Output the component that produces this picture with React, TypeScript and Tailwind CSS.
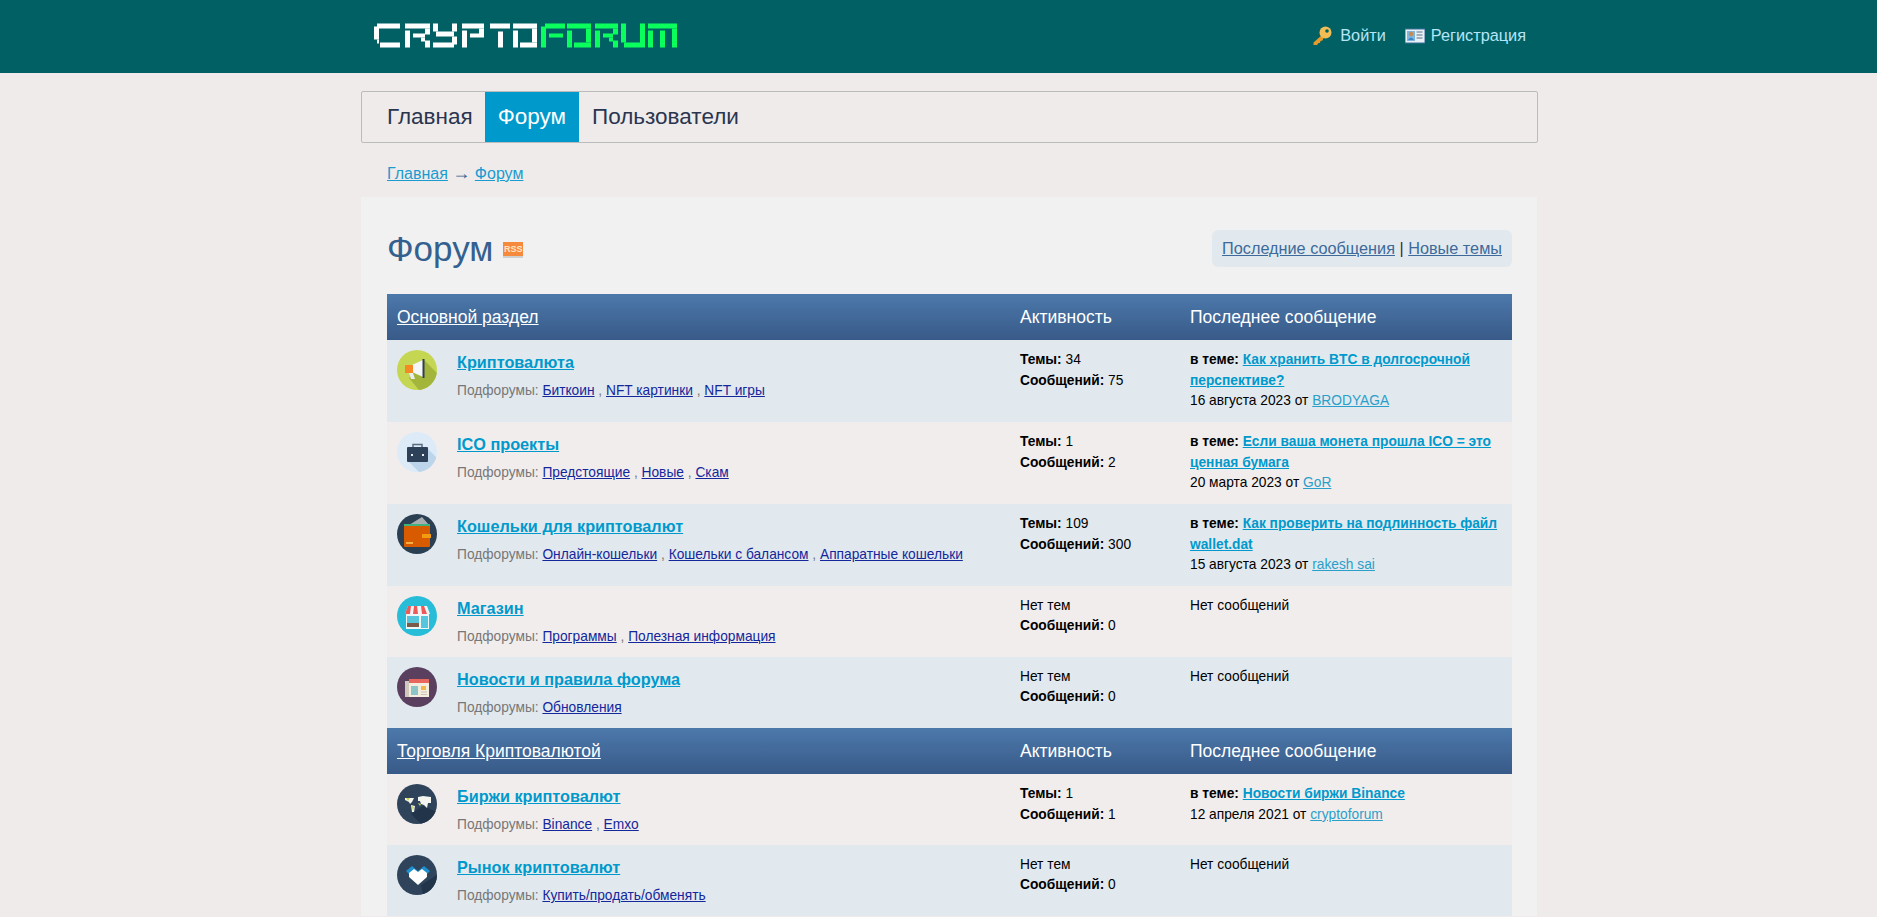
import type { ReactNode } from "react";

type Forum = {
  icon: ReactNode;
  title: string;
  subs: string[];
  topics?: number;
  posts: number;
  topic?: string;
  date?: string;
  author?: string;
};

type Section = { title: string; forums: Forum[] };

// every glyph of the logo is a few blocks: [x, y, w, h] in a 24x24 cell
const logoLetters: { x: number; w: number; green?: boolean; blocks: number[][] }[] = [
  { x: 0, w: 26, blocks: [[3, 0, 23, 5], [0, 3, 5, 13], [3, 16, 2, 4], [6, 19, 20, 5]] },
  { x: 31, w: 25, blocks: [[0, 0, 25, 5], [0, 7, 5, 17], [20, 5, 5, 6], [8, 10, 12, 4], [16, 14, 4, 4], [20, 17, 5, 7]] },
  { x: 59, w: 24, blocks: [[0, 0, 5, 8], [19, 0, 5, 8], [3, 8, 18, 5], [0, 19, 21, 5], [19, 13, 5, 8]] },
  { x: 88, w: 22, blocks: [[0, 0, 22, 5], [0, 7, 5, 17], [17, 5, 5, 6], [8, 10, 14, 4]] },
  { x: 116, w: 20, blocks: [[0, 0, 20, 5], [8, 8, 5, 16]] },
  { x: 139, w: 24, blocks: [[0, 0, 24, 5], [0, 7, 5, 17], [19, 5, 5, 14], [7, 19, 17, 5]] },
  { x: 167, w: 22, green: true, blocks: [[4, 0, 20, 5], [0, 3, 5, 21], [8, 10, 14, 4]] },
  { x: 193, w: 24, green: true, blocks: [[0, 0, 24, 5], [0, 7, 5, 17], [19, 5, 5, 14], [7, 19, 17, 5]] },
  { x: 221, w: 23, green: true, blocks: [[0, 0, 23, 5], [0, 7, 5, 17], [18, 5, 5, 6], [8, 10, 10, 4], [14, 14, 4, 4], [18, 17, 5, 7]] },
  { x: 247, w: 24, green: true, blocks: [[0, 0, 5, 19], [19, 0, 5, 24], [3, 19, 16, 5]] },
  { x: 274, w: 29, green: true, blocks: [[0, 0, 29, 5], [0, 7, 5, 17], [12, 7, 5, 17], [24, 5, 5, 19]] },
];

function Logo() {
  return (
    <svg width="303" height="25" viewBox="0 0 303 24" role="img" aria-label="CryptoForum" className="block">
      {logoLetters.map((letter) => (
        <g key={letter.x} fill={letter.green ? "#0aff5c" : "#ffffff"} transform={`translate(${letter.x} 0)`}>
          {letter.blocks.map((b, i) => (
            <rect key={i} x={b[0]} y={b[1]} width={b[2]} height={b[3]} />
          ))}
        </g>
      ))}
    </svg>
  );
}

function KeyIcon() {
  return (
    <svg width="20" height="20" viewBox="0 0 20 20" className="shrink-0">
      <path d="M10 9 1.5 16.5 1.5 19 5 19 6.5 17 8 17 8.5 15 10.5 14.5 12 11Z" fill="#e59a2c" />
      <circle cx="13.5" cy="6.5" r="6" fill="#f2bd55" />
      <circle cx="15" cy="5" r="1.8" fill="#00605f" />
    </svg>
  );
}

function CardIcon() {
  return (
    <svg width="20" height="16" viewBox="0 0 20 16" className="shrink-0">
      <rect x="0" y="1" width="20" height="14" fill="#e8f0f5" stroke="#3b6f9a" />
      <rect x="2" y="3" width="8" height="10" fill="#7db4e0" />
      <circle cx="6" cy="6" r="2.2" fill="#c98a4e" />
      <path d="M3 12q3-5 6 0Z" fill="#3c86c8" />
      <path d="M11.5 4h6M11.5 7h6M11.5 10h6" stroke="#8a9aa8" strokeWidth="1.3" />
    </svg>
  );
}

function RssIcon() {
  return (
    <span className="ml-[10px] mt-[3px] flex h-[16px] w-[20px] items-center justify-center bg-[#f58a3c] border-b-2 border-[#cfcfcf] text-[9px] font-bold leading-none text-[#ffe4c8]">
      RSS
    </span>
  );
}

function Circle({ bg, children }: { bg: string; children: ReactNode }) {
  return (
    <svg width="40" height="40" viewBox="0 0 40 40" className="block shrink-0">
      <defs>
        <clipPath id="forum-circle">
          <circle cx="20" cy="20" r="20" />
        </clipPath>
      </defs>
      <circle cx="20" cy="20" r="20" fill={bg} />
      <g clipPath="url(#forum-circle)">{children}</g>
    </svg>
  );
}

const MegaphoneIcon = (
  <Circle bg="#c5d652">
    <path d="M27 10 40 23V40H22L12 28Z" fill="#a3b53a" />
    <path d="M15 15 26 10V27L15 22Z" fill="#f4f6f7" />
    <rect x="8" y="15" width="8" height="8" fill="#f58a25" />
    <path d="M12 23h4l2 6h-4Z" fill="#e9eef1" />
    <rect x="25.5" y="9" width="2" height="19" fill="#2f3f50" />
  </Circle>
);

const BriefcaseIcon = (
  <Circle bg="#dcebf7">
    <path d="M29 15 40 26V40H22L10 28Z" fill="#bcd5ea" />
    <rect x="10" y="15" width="21" height="15" rx="1" fill="#2d4258" />
    <path d="M16 15v-2.5h9V15" fill="none" stroke="#5a6d80" strokeWidth="1.5" />
    <rect x="14" y="22" width="2" height="2" fill="#e8eef3" />
    <rect x="25" y="22" width="2" height="2" fill="#e8eef3" />
  </Circle>
);

const WalletIcon = (
  <Circle bg="#2b3f53">
    <path d="M12 11 25 3 32 11Z" fill="#a8adb0" />
    <rect x="7" y="10" width="26" height="3" fill="#3fb27f" />
    <rect x="7" y="12" width="26" height="21" rx="1" fill="#d95b00" />
    <rect x="25" y="20" width="9" height="4" fill="#f39c12" />
    <rect x="9" y="28" width="7" height="2" fill="#f5b041" />
  </Circle>
);

const ShopIcon = (
  <Circle bg="#27bcd8">
    <rect x="9" y="18" width="23" height="15" fill="#eef6f8" />
    <rect x="10" y="20" width="12" height="8" fill="#55c6dc" />
    <rect x="24" y="20" width="7" height="12" fill="#55c6dc" />
    <rect x="10" y="27" width="12" height="4" fill="#7a5a48" />
    <path d="M11 10h19l3 8H8Z" fill="#f4f4f4" />
    <path d="M11 10h3l-1 8H8ZM17 10h3l1 8h-5ZM24 10h3l3 8h-5Z" fill="#ee5a5a" />
  </Circle>
);

const NewsIcon = (
  <Circle bg="#5a3f5f">
    <rect x="8" y="14" width="5" height="16" fill="#cfc8bd" />
    <rect x="12" y="12" width="20" height="18" fill="#f4ecdc" />
    <rect x="12" y="12" width="20" height="4" fill="#e8665c" />
    <rect x="14" y="19" width="7" height="9" fill="#8cc4c8" />
    <rect x="24" y="19" width="5" height="4" fill="#f0b84c" />
    <path d="M24 25h6M24 27.5h6" stroke="#c8c0b0" />
  </Circle>
);

const MapIcon = (
  <Circle bg="#2f445b">
    <path d="M26 22 40 28V40H24L14 30Z" fill="#21344a" />
    <path d="M8 14h9l-2 4-2 2-1-2-4-2ZM14 21l4 1-1 6-2 0ZM21 13l5-1 8 1 0 6-3 0-1 5-3-3-3-1-1-3-2 0Z" fill="#f3f5ee" />
    <path d="M9 14l4 0-2 3ZM15 22l2 1-1 4ZM21 19l3 1-1 2Z" fill="#c8d84e" />
  </Circle>
);

const HandshakeIcon = (
  <Circle bg="#2f445b">
    <path d="M24 30 40 20V40H26Z" fill="#21344a" />
    <path d="M9 16 15 11 21 16 27 11 33 16 28 21H14Z" fill="#1e8fd0" />
    <path d="M12 18 17 14 21 17 25 14 30 18 30 22 21 30 12 22Z" fill="#ffffff" />
  </Circle>
);

const sections: Section[] = [
  {
    title: "Основной раздел",
    forums: [
      {
        icon: MegaphoneIcon,
        title: "Криптовалюта",
        subs: ["Биткоин", "NFT картинки", "NFT игры"],
        topics: 34,
        posts: 75,
        topic: "Как хранить BTC в долгосрочной перспективе?",
        date: "16 августа 2023",
        author: "BRODYAGA",
      },
      {
        icon: BriefcaseIcon,
        title: "ICO проекты",
        subs: ["Предстоящие", "Новые", "Скам"],
        topics: 1,
        posts: 2,
        topic: "Если ваша монета прошла ICO = это ценная бумага",
        date: "20 марта 2023",
        author: "GoR",
      },
      {
        icon: WalletIcon,
        title: "Кошельки для криптовалют",
        subs: ["Онлайн-кошельки", "Кошельки с балансом", "Аппаратные кошельки"],
        topics: 109,
        posts: 300,
        topic: "Как проверить на подлинность файл wallet.dat",
        date: "15 августа 2023",
        author: "rakesh sai",
      },
      { icon: ShopIcon, title: "Магазин", subs: ["Программы", "Полезная информация"], posts: 0 },
      { icon: NewsIcon, title: "Новости и правила форума", subs: ["Обновления"], posts: 0 },
    ],
  },
  {
    title: "Торговля Криптовалютой",
    forums: [
      {
        icon: MapIcon,
        title: "Биржи криптовалют",
        subs: ["Binance", "Emxo"],
        topics: 1,
        posts: 1,
        topic: "Новости биржи Binance",
        date: "12 апреля 2021",
        author: "cryptoforum",
      },
      { icon: HandshakeIcon, title: "Рынок криптовалют", subs: ["Купить/продать/обменять"], posts: 0 },
    ],
  },
];

function ForumRow({ forum, shaded }: { forum: Forum; shaded: boolean }) {
  const hasTopics = forum.topics !== undefined;
  return (
    <div className={`grid grid-cols-[623px_170px_1fr] ${shaded ? "bg-[#e1e9ef]" : "bg-[#f2eded]"}`}>
      <div className="flex gap-[20px] pl-[10px] pt-[10px] pb-[9px]">
        {forum.icon}
        <div>
          <a href="#" className="block h-[24px] text-[16.25px] font-bold leading-[24px] text-[#0099cc] underline">
            {forum.title}
          </a>
          <p className="mt-[5px] text-[13.75px] leading-[23px] text-[#777777]">
            Подфорумы:{" "}
            {forum.subs.map((sub, i) => (
              <span key={sub}>
                {i > 0 && " , "}
                <a href="#" className="text-[#14279b] underline">
                  {sub}
                </a>
              </span>
            ))}
          </p>
        </div>
      </div>

      <div className={`px-[10px] text-[13.75px] text-black ${hasTopics ? "pt-[10px] leading-[20.5px]" : "pt-[10px] leading-[20px]"}`}>
        {hasTopics ? (
          <p>
            <b>Темы:</b> {forum.topics}
          </p>
        ) : (
          <p>Нет тем</p>
        )}
        <p>
          <b>Сообщений:</b> {forum.posts}
        </p>
      </div>

      <div className={`px-[10px] text-[13.75px] text-black ${hasTopics ? "pt-[10px] pb-[10.5px] leading-[20.5px]" : "pt-[10px] leading-[20px]"}`}>
        {forum.topic ? (
          <>
            <p>
              <b>в теме:</b>{" "}
              <a href="#" className="font-bold text-[#0099cc] underline">
                {forum.topic}
              </a>
            </p>
            <p>
              {forum.date} от{" "}
              <a href="#" className="text-[#2a9fc9] underline">
                {forum.author}
              </a>
            </p>
          </>
        ) : (
          <p>Нет сообщений</p>
        )}
      </div>
    </div>
  );
}

export default function App() {
  let rowIndex = 0;
  return (
    <div className="h-screen overflow-hidden bg-[#efebea] font-['Liberation_Sans',Arial,sans-serif]">
      {/* Top bar */}
      <header className="h-[73px] bg-[#006064]">
        <div className="ml-[361px] flex h-full w-[1177px] items-center justify-between pb-[2px] pl-[13px] pr-[12px]">
          <Logo />
          <div className="flex items-center text-[16.3px] text-[#b5e5f7]">
            <a href="#" className="flex items-center gap-[8px]">
              <KeyIcon />
              Войти
            </a>
            <a href="#" className="ml-[19px] flex items-center gap-[6px]">
              <CardIcon />
              Регистрация
            </a>
          </div>
        </div>
      </header>

      <div className="ml-[361px] w-[1177px]">
        {/* Main menu */}
        <nav className="mt-[18px] flex h-[52px] items-stretch rounded-[2px] border border-[#bbbbbb] pl-[13px] text-[22.5px] text-[#2a3550]">
          <a href="#" className="flex items-center pl-[12px] pr-[12px]">
            Главная
          </a>
          <a href="#" className="flex items-center bg-[#0099cc] px-[13px] text-white">
            Форум
          </a>
          <a href="#" className="flex items-center px-[13px]">
            Пользователи
          </a>
        </nav>

        {/* Breadcrumb */}
        <div className="mt-[19px] pl-[26px] text-[16px] leading-[23px] text-[#34608f]">
          <a href="#" className="text-[#1a9cd0] underline">
            Главная
          </a>{" "}
          <span className="text-[18px] leading-none">→</span>{" "}
          <a href="#" className="text-[#1a9cd0] underline">
            Форум
          </a>
        </div>

        {/* Forum panel */}
        <main className="mt-[12px] w-[1176px] bg-[#f1f1f1] pl-[26px] pr-[25px] pt-[33px]">
          <div className="flex h-[64px] items-start justify-between">
            <div className="flex items-center">
              <h1 className="text-[35px] font-normal leading-[37px] text-[#34608f]">Форум</h1>
              <RssIcon />
            </div>
            <div className="rounded-[6px] bg-[#e1e9ef] px-[10px] py-[7px] text-[16.25px] leading-[23px] text-[#5a1a1a]">
              <a href="#" className="text-[#3d6a9a] underline">
                Последние сообщения
              </a>{" "}
              |{" "}
              <a href="#" className="text-[#3d6a9a] underline">
                Новые темы
              </a>
            </div>
          </div>

          {sections.map((section) => (
            <section key={section.title}>
              <div className="grid h-[46px] grid-cols-[623px_170px_1fr] items-center bg-gradient-to-b from-[#4c79ab] to-[#385a88] text-[17.5px] text-white">
                <a href="#" className="pl-[10px] underline">
                  {section.title}
                </a>
                <div className="px-[10px]">Активность</div>
                <div className="px-[10px]">Последнее сообщение</div>
              </div>
              {section.forums.map((forum) => {
                const shaded = rowIndex++ % 2 === 0;
                return <ForumRow key={forum.title} forum={forum} shaded={shaded} />;
              })}
            </section>
          ))}
        </main>
      </div>
    </div>
  );
}
